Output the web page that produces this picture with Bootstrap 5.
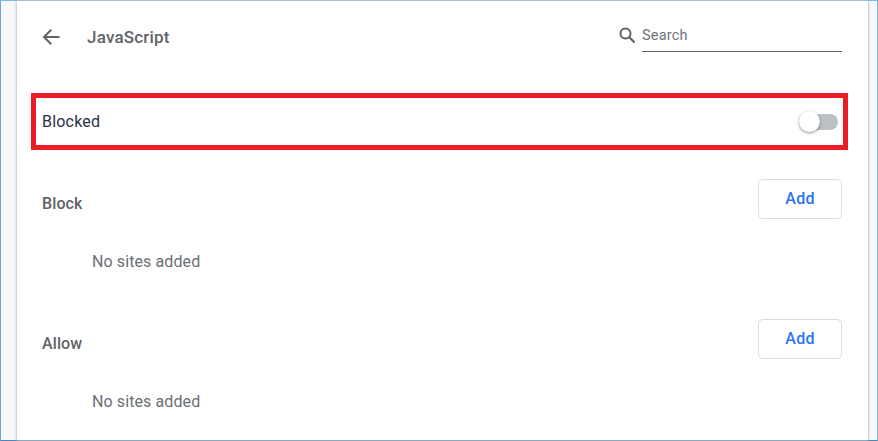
<!DOCTYPE html>
<html lang="en">
<head>
<meta charset="utf-8">
<title>JavaScript</title>
<link href="https://cdn.jsdelivr.net/npm/bootstrap@5.3.0/dist/css/bootstrap.min.css" rel="stylesheet">
<style>
html,body{height:100%;margin:0;overflow:hidden}
body{font-family:Roboto,"Liberation Sans",sans-serif;background:#fff}
.win{height:441px;width:878px;border:1px solid #7db9e8;border-bottom-color:#4a86b8;border-left-color:#69abdd;border-right-color:#7db9e8;background:#f7f8fa}
.pane{width:851px;height:100%;background:#fff;box-shadow:-1px 0 2px #c4c6c9,1px 0 2px #c4c6c9;overflow:hidden;margin-left:16px}
.head{height:71px;padding:0 26px 0 24px}
.back{width:20px;height:20px;margin-right:26px}
.ttl{font-size:17px;font-weight:500;color:#5f6368;letter-spacing:.2px;position:relative;top:1px}
.srch{width:224px}
.srch svg{width:19px;height:19px;margin-right:5px;position:relative;top:-1px}
.srch-f{flex:1;border-bottom:1px solid #5f6368;height:31px;font-size:14.5px;color:#70757a;line-height:29px;letter-spacing:.2px}
.hl{height:57px;margin:21px 0 0 14px;width:817px;border:5px solid #ed1c24;padding:0 5px 0 6px;color:#27333f;font-size:16px;letter-spacing:.2px}
.hl-txt{position:relative;top:.5px}
.sw{width:38px;height:16px;background:#bdc1c6;border-radius:8px;position:relative}
.knob{position:absolute;left:-1px;top:-2.5px;width:21px;height:21px;border-radius:50%;background:#fff;box-shadow:0 1px 3px rgba(0,0,0,.45)}
.sec{height:40px;padding:0 26px 0 25px;color:#5f6368}
.lbl{font-size:16px;font-weight:500;position:relative;top:5px;letter-spacing:.1px}
.btn-add{width:84px;height:40px;border:1px solid #dadce0;border-radius:5px;color:#2b73f0;font-size:16px;font-weight:500;background:#fff;padding:0;letter-spacing:.3px}
.empty{height:100px;padding:33px 0 0 75px;font-size:16px;letter-spacing:.1px;color:#6b6f74;line-height:20px}
.sec1{margin-top:29px}
</style>
</head>
<body>
<div class="win">
  <main class="pane">
    <div class="head d-flex align-items-center">
      <svg class="back" viewBox="0 0 20 20" aria-hidden="true"><path d="M18.5 10H3.5M10.2 2.8 3 10l7.2 7.2" fill="none" stroke="#5f6368" stroke-width="2"/></svg>
      <div class="ttl">JavaScript</div>
      <div class="srch ms-auto d-flex align-items-center">
        <svg viewBox="0 0 19 19" aria-hidden="true"><circle cx="7.5" cy="7.5" r="5" fill="none" stroke="#5f6368" stroke-width="2"/><path d="m11.3 11.3 5.2 5.2" stroke="#5f6368" stroke-width="2.2"/></svg>
        <div class="srch-f">Search</div>
      </div>
    </div>
    <div class="hl d-flex align-items-center justify-content-between">
      <span class="hl-txt">Blocked</span>
      <div class="sw"><div class="knob"></div></div>
    </div>
    <div class="sec sec1 d-flex align-items-center justify-content-between">
      <span class="lbl">Block</span>
      <button type="button" class="btn btn-add">Add</button>
    </div>
    <div class="empty">No sites added</div>
    <div class="sec d-flex align-items-center justify-content-between">
      <span class="lbl">Allow</span>
      <button type="button" class="btn btn-add">Add</button>
    </div>
    <div class="empty">No sites added</div>
  </main>
</div>
</body>
</html>
